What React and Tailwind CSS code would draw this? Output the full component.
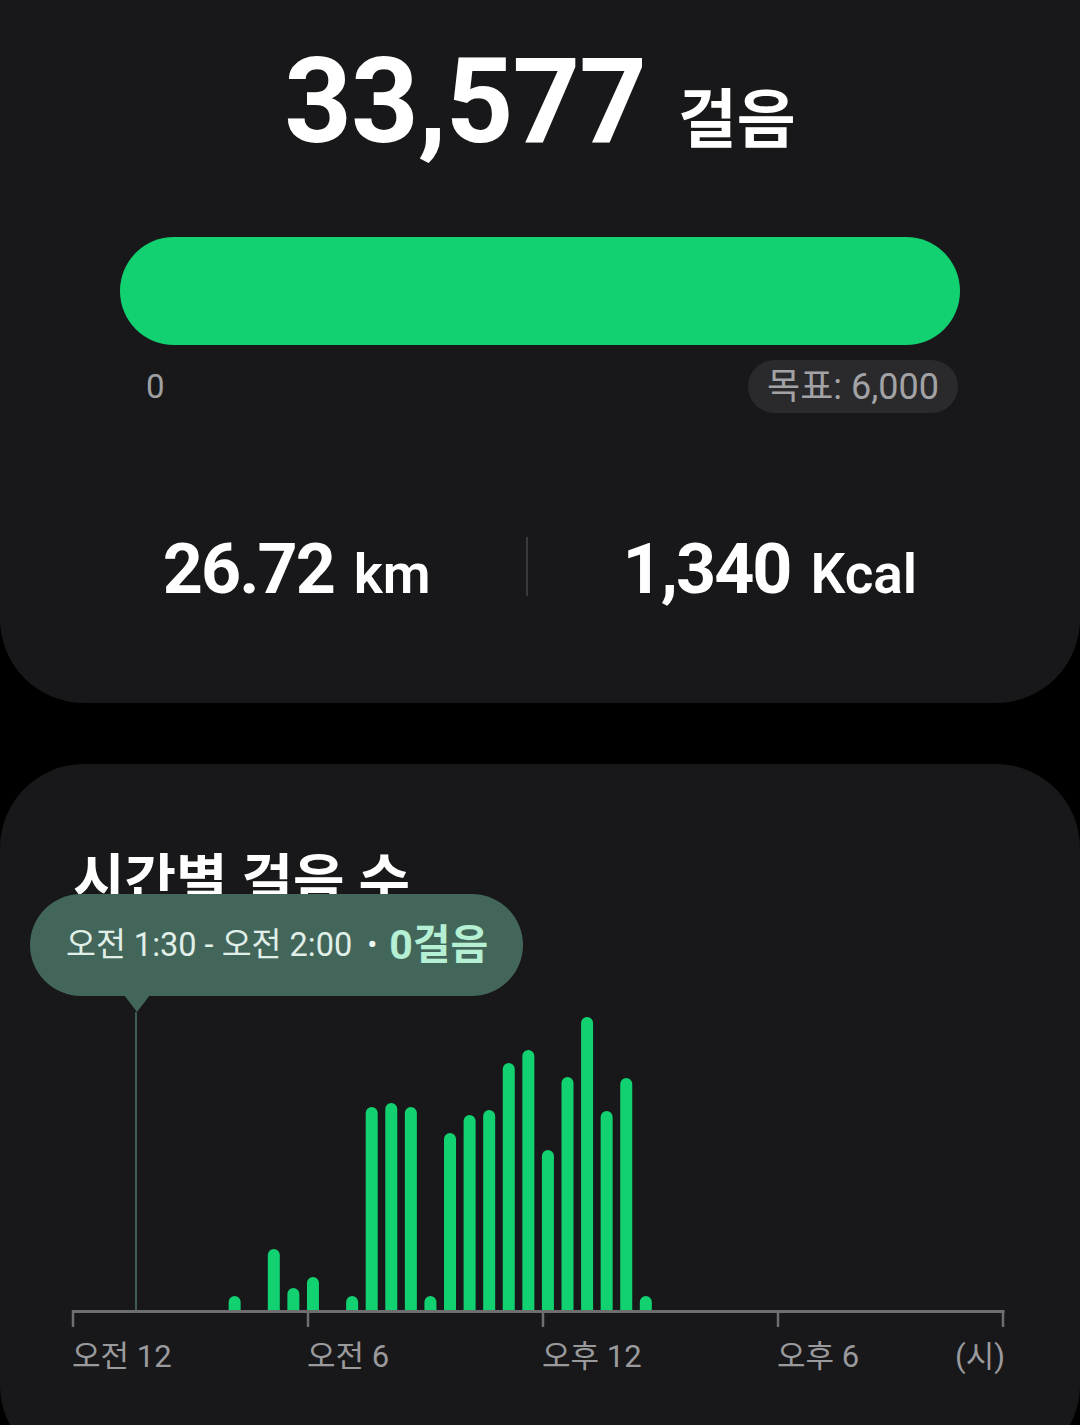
import React from 'react';

// half-hour slot index -> bar top (page y)
const bars = [
  [8, 1296], [10, 1249], [11, 1288], [12, 1277], [14, 1296],
  [15, 1107], [16, 1103], [17, 1107], [18, 1296], [19, 1133],
  [20, 1115], [21, 1110], [22, 1063], [23, 1050], [24, 1150],
  [25, 1077], [26, 1017], [27, 1111], [28, 1078], [29, 1296],
];

const ticks = [73, 308, 543, 778, 1003];

function barPath(i, top) {
  const cx = 73 + 19.58 * i + 5;
  const y = top - 1000;
  const r = 6;
  return `M${cx - r},310 V${y + r} A${r} ${r} 0 0 1 ${cx + r},${y + r} V310 Z`;
}

function HourlyChart() {
  return (
    <svg width="1080" height="330" viewBox="0 0 1080 330" className="block">
      <rect x="135" y="12" width="2" height="299" fill="#3d5c52" />
      {bars.map(([i, top]) => (
        <path key={i} d={barPath(i, top)} fill="#12d170" />
      ))}
      <rect x="72" y="310" width="932.5" height="3" fill="#6e6e70" />
      {ticks.map((x) => (
        <rect key={x} x={x - 1.25} y="310" width="2.5" height="17" fill="#6e6e70" />
      ))}
    </svg>
  );
}

export default function App() {
  return (
    <div className="min-h-[1425px] w-[1080px] overflow-hidden bg-black font-[Roboto,'Noto_Sans_CJK_KR',sans-serif]">
      {/* summary card */}
      <div className="flex h-[703px] flex-col items-center rounded-b-[84px] bg-[#18181a]">
        <div className="mt-[43px] flex items-baseline leading-none text-white">
          <span className="text-[118px] font-bold tracking-[-1px]">33,577</span>
          <span className="ml-[32px] text-[64px] font-bold">걸음</span>
        </div>

        <div className="mt-[76px] h-[108px] w-[840px] rounded-full bg-[#12d170]" />

        <div className="mt-[15px] flex w-[840px] items-center justify-between pl-[26px] pr-[2px]">
          <span className="text-[33px] leading-none text-[#a0a0a3]">0</span>
          <div className="flex h-[53px] items-center rounded-full bg-[#2a2a2d] px-[19px] text-[36px] leading-none text-[#a3a3a6]">
            목표: 6,000
          </div>
        </div>

        <div className="mt-[121px] flex items-start gap-[95px] leading-none text-white">
          <div className="flex items-baseline">
            <span className="text-[70px] font-bold tracking-[-2px]">26.72</span>
            <span className="ml-[20px] text-[55px] font-semibold">km</span>
          </div>
          <div className="mt-[3px] h-[59px] w-[2px] bg-[#3a3a3c]" />
          <div className="flex items-baseline">
            <span className="text-[70px] font-bold tracking-[-2px]">1,340</span>
            <span className="ml-[20px] text-[55px] font-semibold">Kcal</span>
          </div>
        </div>
      </div>

      {/* hourly steps card */}
      <div className="relative mt-[61px] h-[705px] rounded-[84px] bg-[#18181a]">
        <h2 className="pl-[73px] pt-[89px] text-[56px] font-bold leading-none text-white">
          시간별 걸음 수
        </h2>

        <div className="mt-[91px]">
          <HourlyChart />
        </div>

        <div className="mt-[11px] grid grid-cols-[235px_235px_235px_1fr] pl-[72px] pr-[75px] text-[31px] leading-none text-[#9a9a9d]">
          <span>오전 12</span>
          <span>오전 6</span>
          <span>오후 12</span>
          <div className="flex justify-between">
            <span>오후 6</span>
            <span>(시)</span>
          </div>
        </div>

        {/* tooltip over the chart */}
        <div className="absolute left-[30px] top-[130px] flex h-[102px] w-[493px] items-center rounded-full bg-[#43665a] pl-[36px] leading-none">
          <span className="text-[32.5px] text-[#e0efe8]">오전 1:30 - 오전 2:00</span>
          <span className="ml-[15px] mr-[12px] text-[30px] text-[#eef6f2]">•</span>
          <span className="text-[41px] font-bold text-[#b5f0d4]">0걸음</span>
          <svg width="26" height="17" viewBox="0 0 26 17" className="absolute left-[94px] top-[101px]">
            <path d="M0 0 H26 L13 17 Z" fill="#43665a" />
          </svg>
        </div>
      </div>
    </div>
  );
}
